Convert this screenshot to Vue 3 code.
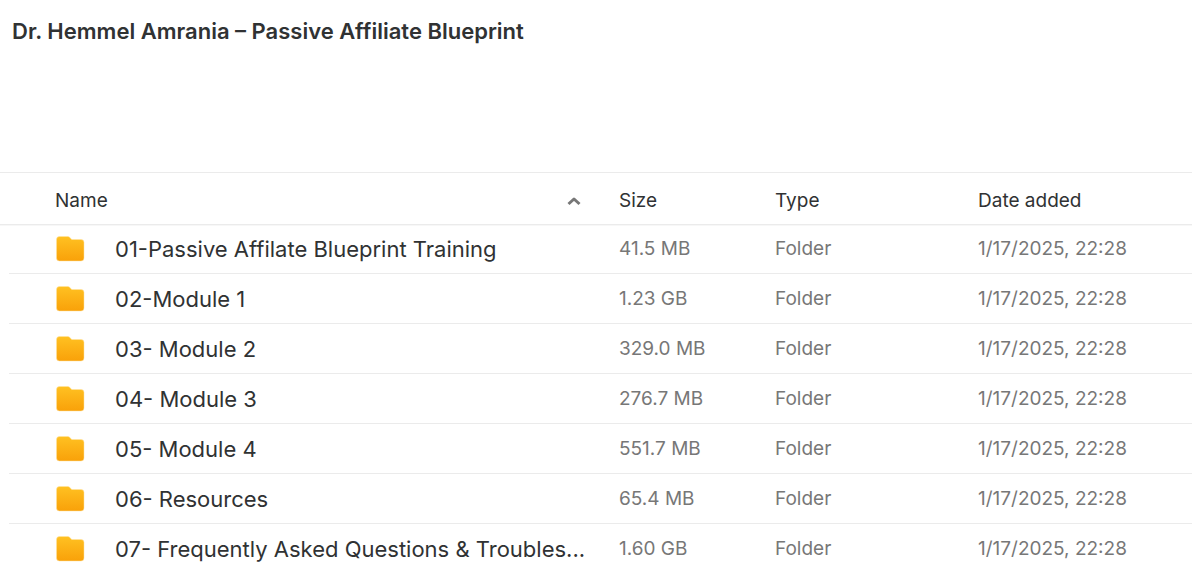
<script setup>
import { ref, computed } from 'vue'

const ascending = ref(true)
const added = '1/17/2025, 22:28'
const folders = [
  { name: '01-Passive Affilate Blueprint Training', size: '41.5 MB' },
  { name: '02-Module 1', size: '1.23 GB' },
  { name: '03- Module 2', size: '329.0 MB' },
  { name: '04- Module 3', size: '276.7 MB' },
  { name: '05- Module 4', size: '551.7 MB' },
  { name: '06- Resources', size: '65.4 MB' },
  { name: '07- Frequently Asked Questions & Troubles...', size: '1.60 GB' }
]
const rows = computed(() => (ascending.value ? folders : [...folders].reverse()))
</script>

<template>
  <main class="page">
    <h1 class="title">Dr. Hemmel Amrania – Passive Affiliate Blueprint</h1>
    <table class="files">
      <colgroup>
        <col class="col-gutter" />
        <col class="col-name" />
        <col class="col-size" />
        <col class="col-type" />
        <col class="col-date" />
      </colgroup>
      <thead>
        <tr>
          <td></td>
          <th class="name" scope="col" :aria-sort="ascending ? 'ascending' : 'descending'">
            <button class="sort" type="button" @click="ascending = !ascending">
              <span>Name</span>
              <svg class="chevron" :class="{ down: !ascending }" viewBox="0 0 14 10" aria-hidden="true">
                <path d="M1.500 8 7 3l5.500 5" fill="none" stroke="#777" stroke-width="3" stroke-linejoin="round" />
              </svg>
            </button>
          </th>
          <th scope="col">Size</th>
          <th scope="col">Type</th>
          <th scope="col">Date added</th>
        </tr>
      </thead>
      <tbody>
        <tr v-for="row in rows" :key="row.name">
          <td class="gutter"></td>
          <td class="name">
            <div class="entry">
              <svg class="folder" viewBox="0 0 30 26" aria-hidden="true">
                <defs>
                  <linearGradient id="folder-fill" x1="0" y1="0" x2="0" y2="1">
                    <stop offset="0" stop-color="#ffc122" />
                    <stop offset="1" stop-color="#f9a109" />
                  </linearGradient>
                </defs>
                <path d="M4.500.5h8.300c.7 0 1.400.3 1.900.8l2 2.200h9.300a3 3 0 0 1 3 3v15.500a3 3 0 0 1-3 3H4.500a3 3 0 0 1-3-3v-18.500a3 3 0 0 1 3-3z" fill="url(#folder-fill)" stroke="#ffe3a0" stroke-width="1" stroke-opacity=".5" />
              </svg>
              <span class="label">{{ row.name }}</span>
            </div>
          </td>
          <td>{{ row.size }}</td>
          <td>Folder</td>
          <td>{{ added }}</td>
        </tr>
      </tbody>
    </table>
  </main>
</template>

<style>
body {
  background: #fff;
}
</style>

<style scoped>
.page {
  font-family: Inter, "Liberation Sans", sans-serif;
  color: #303233;
}
.title {
  margin: 0;
  padding: 16px 12px 126px;
  font-size: 22px;
  line-height: 30px;
  font-weight: 600;
}
.files {
  width: 100%;
  table-layout: fixed;
  border-collapse: separate;
  border-spacing: 0;
  font-size: 19px;
  line-height: 24px;
}
.col-gutter { width: 9px; }
.col-name { width: 610px; }
.col-size { width: 156px; }
.col-type { width: 203px; }
th,
td {
  padding: 0;
  text-align: left;
  font-weight: 400;
  white-space: nowrap;
}
.name {
  padding: 0 32px 0 46px;
}
thead tr > * {
  box-sizing: border-box;
  height: 52px;
  padding-top: 4px;
  border-top: 1px solid #ebebeb;
  box-shadow: 0 1px #ebebeb, 0 2px #f7f7f7;
}
thead .name {
  padding-top: 4px;
}
tbody td {
  box-sizing: border-box;
  height: 50px;
  border-bottom: 1px solid #ebebeb;
  color: #777;
}
tbody .gutter {
  border-bottom: 0;
}
.sort {
  display: flex;
  align-items: center;
  justify-content: space-between;
  width: 100%;
  padding: 0;
  border: 0;
  background: none;
  color: inherit;
  font: inherit;
  cursor: pointer;
}
.chevron {
  width: 14px;
  height: 10px;
  margin-right: 6px;
}
.chevron.down {
  transform: rotate(180deg);
}
.entry {
  display: flex;
  align-items: center;
  gap: 30px;
}
.folder {
  flex: none;
  width: 30px;
  height: 26px;
}
.label {
  color: #303233;
  font-size: 22px;
  line-height: 30px;
}
</style>
